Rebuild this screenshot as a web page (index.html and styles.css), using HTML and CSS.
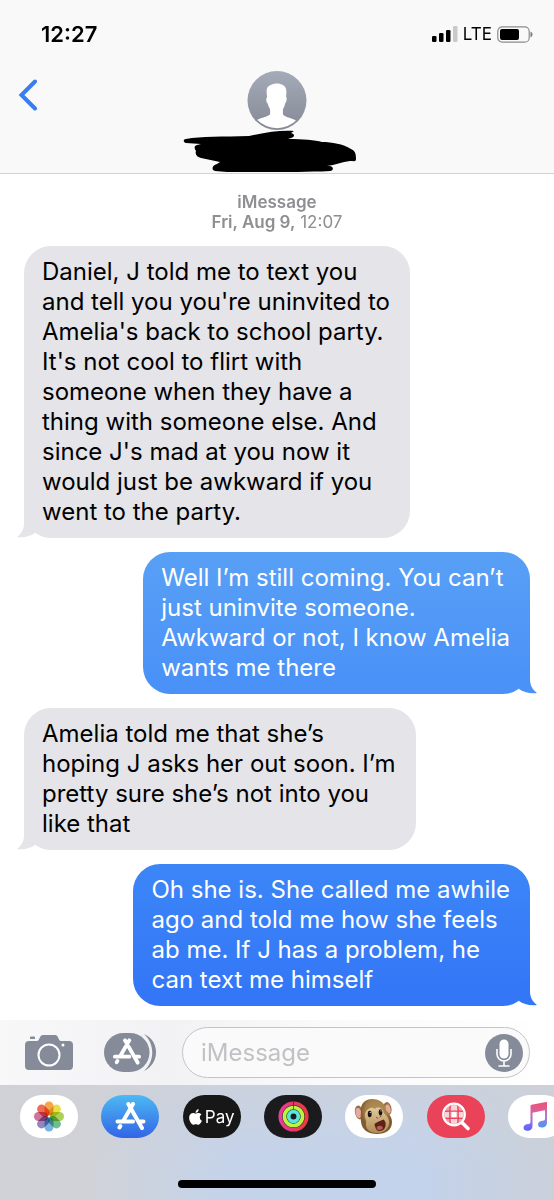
FILE: index.html
```
<!DOCTYPE html>
<html lang="en">
<head>
  <meta charset="UTF-8">
  <meta name="viewport" content="width=device-width, initial-scale=1">
  <title>iMessage</title>
  <link rel="stylesheet" href="styles.css">
</head>
<body>

<header class="header">
  <div class="status">
    <time class="clock">12:27</time>
    <div class="status-icons">
      <svg width="26" height="16" viewBox="0 0 26 16" aria-hidden="true">
        <rect x="0" y="10" width="4.500" height="6" rx="1.200"/>
        <rect x="7" y="7" width="4.500" height="9" rx="1.200"/>
        <rect x="14" y="4" width="4.500" height="12" rx="1.200"/>
        <rect x="21" y="0" width="4.500" height="16" rx="1.200" fill="#c9c9c9"/>
      </svg>
      <span>LTE</span>
      <svg width="36" height="17" viewBox="0 0 36 17" aria-hidden="true">
        <rect x=".8" y=".8" width="31.4" height="15.4" rx="4.5" fill="none" stroke="#8c8c8c" stroke-width="1.2"/>
        <rect x="3" y="3" width="19" height="11" rx="2"/>
        <path d="M33.5 5.5q2 .8 2 3t-2 3z" fill="#777"/>
      </svg>
    </div>
  </div>

  <div class="nav">
    <button class="back" aria-label="Back">
      <svg width="20" height="32" viewBox="0 0 20 32"><path d="M17 2.500 3.500 16 17 29.500" fill="none" stroke="#3a7df0" stroke-width="4" stroke-linecap="round"/></svg>
    </button>
    <div class="contact">
      <svg width="60" height="59" viewBox="0 0 60 60" aria-hidden="true">
        <defs>
          <linearGradient id="avatar" x2="0" y2="1"><stop stop-color="#a5abb9"/><stop offset="1" stop-color="#858995"/></linearGradient>
          <clipPath id="face"><circle cx="30" cy="30" r="28.200"/></clipPath>
        </defs>
        <circle cx="30" cy="30" r="30" fill="url(#avatar)"/>
        <path clip-path="url(#face)" fill="#fff" d="M20 27c-1.300-9-.2-11 3-12.500 4.500-2.500 9.500-2.500 13.500 0 3 2 3.500 5 2.700 12 1.300.5.5 5.500-1 6.500-.5 3-1.500 4.500-2.200 6v5c1 2.500 7 3.500 13 6v10H9V50c6-3 12-3.500 14-6v-5c-1.200-2-2-4-2.500-6-1.600-1-2-5.500-.5-6z"/>
      </svg>
      <svg width="188" height="42" viewBox="0 0 188 42" aria-hidden="true">
        <path d="M3 9C18 6 40 7 66 6 83 2 99 0 111 1l-3 2c4 1 4 4 0 5l-3 1c15 0 27 1 34 3 10 0 21 2 29 7 4 2 5 4 5 10 0 3-2 2-6 2-8 1-15 4-23 5l2 0c5 0 5 5 1 5-14 1-28 0-44 2-18 1-40 1-59-1l-12-1c-4-1-3-6 2-7l3-2-19-4c-5-1-6-5-5-7-2-3-2-5 1-6l4-1L3 13c-3-1-3-4 0-4z"/>
      </svg>
    </div>
  </div>
</header>

<main class="chat">
  <p class="stamp"><b>iMessage</b><br><b>Fri, Aug 9,</b> 12:07</p>

  <p class="bubble received">Daniel, J told me to text you<br>and tell you you're uninvited to<br>Amelia's back to school party.<br>It's not cool to flirt with<br>someone when they have a<br>thing with someone else. And<br>since J's mad at you now it<br>would just be awkward if you<br>went to the party.</p>

  <p class="bubble sent light">Well I’m still coming. You can’t<br>just uninvite someone.<br>Awkward or not, I know Amelia<br>wants me there</p>

  <p class="bubble received">Amelia told me that she’s<br>hoping J asks her out soon. I’m<br>pretty sure she’s not into you<br>like that</p>

  <p class="bubble sent">Oh she is. She called me awhile<br>ago and told me how she feels<br>ab me. If J has a problem, he<br>can text me himself</p>
</main>

<form class="composer">
  <button type="button" aria-label="Camera">
    <svg width="48" height="37" viewBox="0 0 48 37">
      <path fill="#858b99" d="M5 3.500Q5 2.500 6 2.500h3q1 0 1 1V5H5zM4 7h8c3 0 2-6 6-6h12c4 0 3 6 6 6h8q4 0 4 4v21q0 4-4 4H4q-4 0-4-4V11q0-4 4-4z"/>
      <circle cx="24" cy="21" r="10.500" fill="none" stroke="#fff" stroke-width="2"/>
      <circle cx="38" cy="11" r="1.500" fill="#fff"/>
    </svg>
  </button>
  <button type="button" aria-label="Apps">
    <svg width="52" height="39" viewBox="0 0 52 39">
      <path fill="#858b99" d="M19.500 0H26a19.500 19.500 0 0 1 0 39h-6.500a19.500 19.500 0 0 1 0-39z"/>
      <path fill="#858b99" d="M40 1c16 7 16 29 0 37 11-10 11-27 0-37z"/>
      <svg x="9" y="5" width="28" height="27" viewBox="0 0 30 28"><use href="#store-a"/></svg>
    </svg>
  </button>
  <div class="field">
    <input type="text" placeholder="iMessage" aria-label="iMessage">
    <button type="button" aria-label="Record audio">
      <svg width="38" height="38" viewBox="0 0 38 38">
        <circle cx="19" cy="19" r="19" fill="#858b99"/>
        <rect x="14.500" y="5.500" width="9" height="19" rx="4.500" fill="#fff"/>
        <path d="M12 15v5a7 7 0 0 0 14 0v-5M19 27v4.500M13.500 32h11" fill="none" stroke="#fff" stroke-width="1.600"/>
      </svg>
    </button>
  </div>
</form>

<footer class="drawer">
  <nav class="apps" aria-label="iMessage apps">
    <button class="app" aria-label="Photos">
      <svg width="58" height="43" viewBox="0 0 58 43">
        <defs><rect id="petal" x="-4.500" y="-15" width="9" height="14" rx="4.500"/></defs>
        <g class="petals" transform="translate(29 21.500)">
          <use href="#petal" fill="#f5a54a"/>
          <use href="#petal" fill="#e9de45" transform="rotate(45)"/>
          <use href="#petal" fill="#aed058" transform="rotate(90)"/>
          <use href="#petal" fill="#72bd90" transform="rotate(135)"/>
          <use href="#petal" fill="#78b3df" transform="rotate(180)"/>
          <use href="#petal" fill="#9386bd" transform="rotate(225)"/>
          <use href="#petal" fill="#cf729d" transform="rotate(270)"/>
          <use href="#petal" fill="#ed6d56" transform="rotate(315)"/>
        </g>
      </svg>
    </button>
    <button class="app store" aria-label="App Store">
      <svg width="58" height="43" viewBox="0 0 58 43">
        <defs>
          <g id="store-a" fill="none" stroke="#fff" stroke-width="4" stroke-linecap="round">
            <path d="M17.500 2 8 18.500M4.800 24l-.8 1.500M2 19.500h15.500M24.500 19.500H28M12.800 2 26.500 26"/>
          </g>
        </defs>
        <svg x="14" y="7" width="31" height="28" viewBox="0 0 30 28"><use href="#store-a"/></svg>
      </svg>
    </button>
    <button class="app pay" aria-label="Apple Pay">
      <svg width="13" height="16" viewBox="2 0 20 24" fill="#fff"><path d="M12.152 6.896c-.948 0-2.415-1.078-3.960-1.040-2.040.027-3.910 1.183-4.961 3.014-2.117 3.675-.546 9.103 1.519 12.090 1.013 1.454 2.208 3.090 3.792 3.039 1.520-.065 2.090-.987 3.935-.987 1.831 0 2.350.987 3.960.948 1.637-.026 2.676-1.480 3.676-2.948 1.156-1.688 1.636-3.325 1.662-3.415-.039-.013-3.182-1.221-3.220-4.857-.026-3.040 2.480-4.494 2.597-4.559-1.429-2.090-3.623-2.324-4.390-2.376-2-.156-3.675 1.090-4.610 1.090zM15.530 3.830c.843-1.012 1.400-2.427 1.245-3.830-1.207.052-2.662.805-3.532 1.818-.780.896-1.454 2.338-1.273 3.714 1.338.104 2.715-.688 3.559-1.701"/></svg>
      <span>Pay</span>
    </button>
    <button class="app activity" aria-label="Activity">
      <svg width="58" height="43" viewBox="0 0 58 43">
        <defs><linearGradient id="ring"><stop stop-color="#ec3a9d"/><stop offset=".5" stop-color="#e8386c"/><stop offset="1" stop-color="#ee3a3c"/></linearGradient></defs>
        <g fill="none" stroke-width="3.700">
          <circle cx="29.500" cy="21.500" r="13.200" stroke="url(#ring)"/>
          <circle cx="29.500" cy="21.500" r="9" stroke="#bdf444"/>
          <circle cx="29.500" cy="21.500" r="4.800" stroke="#5be6dc"/>
          <path d="M29.500 6.500v4" stroke="#7d1638" stroke-width="1"/>
          <path d="M29.500 11v4" stroke="#50771f" stroke-width="1"/>
        </g>
      </svg>
    </button>
    <button class="app" aria-label="Animoji">
      <svg width="58" height="43" viewBox="0 0 58 43">
        <defs>
          <radialGradient id="fur" cx=".5" cy=".35"><stop stop-color="#b8935a"/><stop offset=".7" stop-color="#a37f4a"/><stop offset="1" stop-color="#7d5b30"/></radialGradient>
          <linearGradient id="skin" x2="0" y2="1"><stop stop-color="#e3c89c"/><stop offset="1" stop-color="#b28a55"/></linearGradient>
        </defs>
        <ellipse cx="14" cy="17.500" rx="4" ry="7" fill="#9a713c" transform="rotate(-12 14 17.500)"/>
        <ellipse cx="13.500" cy="18" rx="2.800" ry="5" fill="#e3aaa0" transform="rotate(-12 13.500 18)"/>
        <ellipse cx="42.500" cy="13.500" rx="4" ry="6.500" fill="#9a713c" transform="rotate(-12 42.500 13.500)"/>
        <ellipse cx="43" cy="14" rx="2.500" ry="4.600" fill="#e3aaa0" transform="rotate(-12 43 14)"/>
        <path fill="url(#fur)" d="M16 17C15 9 20 4 27 4c8 0 13 4 14 11 3 4 6 7 6 12 0 8-6 12-15 12-9 0-15-4-16-12-.5-4-.3-7 0-10z"/>
        <path fill="url(#skin)" d="M30 14c3-3 8-1 9 4 3 3 6 7 5 11-1 6-6 9-12 9-7 0-12-4-11-10 1-3-2-5-1-9 1-5 7-8 10-5z"/>
        <ellipse cx="24.700" cy="19" rx="1.900" ry="3.200" fill="#17120e"/>
        <ellipse cx="35.500" cy="17.300" rx="1.800" ry="3.100" fill="#17120e"/>
        <circle cx="25.200" cy="17.500" r=".6" fill="#fff"/>
        <circle cx="36" cy="15.800" r=".6" fill="#fff"/>
        <path d="M31.500 22.500l1.300.8M35 22l1-.8" stroke="#77502e" stroke-linecap="round"/>
        <path fill="#5c2118" d="M29.500 29c2-2 6-3 9-4.500 3 2 3 8-.5 10.500-3 2-6 1-7-1-.5-2-1.500-3-1.500-5z"/>
        <path fill="#b95a50" d="M31.500 33c1-3 5-3 6.500-.5-1 3-5 4-6.500.5z"/>
      </svg>
    </button>
    <button class="app images" aria-label="Images">
      <svg width="58" height="43" viewBox="0 0 58 43">
        <defs><clipPath id="lens"><circle cx="27" cy="19.500" r="9.500"/></clipPath></defs>
        <g clip-path="url(#lens)">
          <path fill="#f6a0ad" d="M16 8h22v23H16z"/>
          <path fill="#fbd3d9" d="M24 9h6v7h-6zM17 17h6v6h-6zM31 17h6v6h-6zM24 24h6v6h-6z"/>
          <path fill="#fff" d="M24.500 17h5v5h-5z"/>
          <path d="M23.500 8q-1.500 11 0 23M30.500 8q1.500 11 0 23M16 16.500q11-1 22 0M16 23q11 1 22 0" fill="none" stroke="#ea4259" stroke-width="1.200"/>
        </g>
        <circle cx="27" cy="19.500" r="10.800" fill="none" stroke="#fff" stroke-width="2.200"/>
        <path d="m35.500 28 5.500 5.500" stroke="#fff" stroke-width="3.600" stroke-linecap="round"/>
      </svg>
    </button>
    <button class="app" aria-label="Music">
      <svg width="58" height="43" viewBox="0 0 58 43">
        <defs>
          <linearGradient id="note" gradientUnits="userSpaceOnUse" x1="28" y1="8" x2="28" y2="35"><stop stop-color="#ea5476"/><stop offset=".4" stop-color="#d763a5"/><stop offset=".7" stop-color="#936ee8"/><stop offset="1" stop-color="#5a64f4"/></linearGradient>
          <linearGradient id="note-blue" gradientUnits="userSpaceOnUse" x1="28" y1="8" x2="28" y2="33"><stop stop-color="#e9536f"/><stop offset=".5" stop-color="#b578cf"/><stop offset="1" stop-color="#4498f0"/></linearGradient>
        </defs>
        <path fill="url(#note)" d="M22.500 11q0-1 1-1.200L38 7q1-.2 1 .8v7l-14.500 3v13c0 3-2 5-5.300 5-4.500 0-5-5.500-.5-6.500 2-.5 3.800-.3 3.800-2.300z"/>
        <path fill="url(#note-blue)" d="M37 14h2v13.500c0 3-2 5-5.300 5-4.500 0-5-5.500-.5-6.500 2-.5 3.800-.3 3.800-2.300z"/>
      </svg>
    </button>
  </nav>
  <div class="home-bar"></div>
</footer>

</body>
</html>
```
FILE: styles.css
```
* {
  margin: 0;
  padding: 0;
  box-sizing: border-box;
}

body {
  min-height: 100vh;
  display: flex;
  flex-direction: column;
  background: #fff;
  color: #000;
  font-family: Inter, "Liberation Sans", sans-serif;
}

svg {
  display: block;
  flex: none;
}

button {
  border: none;
  background: none;
  color: inherit;
  font-family: inherit;
  cursor: pointer;
}

/* Header */
.header {
  background: #f9f9f9;
  border-bottom: 1px solid #d3d3d3;
}

.status {
  display: flex;
  justify-content: space-between;
  align-items: center;
  padding: 20px 21px 0 41px;
  height: 48px;
}

.clock {
  font-size: 22px;
  font-weight: 600;
}

.status-icons {
  display: flex;
  align-items: center;
  gap: 5px;
  font-size: 17px;
}

.nav {
  display: grid;
  grid-template-columns: 1fr auto 1fr;
  align-items: start;
  padding: 23px 18px 1px;
}

.back {
  justify-self: start;
  padding-top: 8px;
}

.contact {
  display: flex;
  flex-direction: column;
  align-items: center;
}

/* Conversation */
.chat {
  flex: 1;
  display: flex;
  flex-direction: column;
  align-items: flex-start;
  gap: 14px;
  padding: 18px 24px 14px;
}

.stamp {
  align-self: center;
  color: #8e8e93;
  font-size: 17px;
  line-height: 20px;
  text-align: center;
}

.stamp b {
  font-weight: 600;
}

.bubble {
  position: relative;
  padding: 11px 20px 11px 18px;
  border-radius: 27px;
  font-size: 24px;
  line-height: 30px;
}

.received {
  background: #e4e4e9;
}

.sent {
  align-self: flex-end;
  background: linear-gradient(#3c86f8, #3375f6);
  color: #fff;
}

.sent.light {
  background: linear-gradient(#58a0f5, #4990f8);
}

/* Tail at the bottom corner */
.bubble::after {
  content: "";
  position: absolute;
  bottom: 0;
  left: -7px;
  width: 20px;
  height: 30px;
  background: #e4e4e9;
  clip-path: path("M7 0V15C7 22 4 26 0 29C7 30 14 28 18 25L17 18Z");
}

.sent::after {
  left: auto;
  right: -7px;
  background: #3376f6;
  transform: scaleX(-1);
}

.sent.light::after {
  background: #4a91f8;
}

/* Message field */
.composer {
  display: flex;
  align-items: center;
  gap: 31px;
  padding: 7px 24px 7px 25px;
  background: linear-gradient(90deg, #f8f8f9, #f2f2f5 30%, #fafafc 60%, #fff);
}

.field {
  flex: 1;
  min-width: 0;
  display: flex;
  align-items: center;
  height: 51px;
  margin-left: -5px;
  padding: 0 6px 0 18px;
  background: #fafafa;
  border: 1px solid #c4c4c8;
  border-radius: 26px;
}

.field input {
  flex: 1;
  width: 100%;
  min-width: 0;
  border: none;
  outline: none;
  background: none;
  font-family: inherit;
  font-size: 24px;
}

.field input::placeholder {
  color: #c2c2c6;
}

/* App drawer */
.drawer {
  display: flex;
  flex-direction: column;
  gap: 42px;
  padding: 10px 0 12px;
  overflow: hidden;
  background:
    linear-gradient(rgba(208, 209, 214, .6), rgba(208, 209, 214, 0) 70%),
    linear-gradient(90deg, #d1d2d7 15%, #c4d3ea 42%, #c3d3ec 75%, #cad0da);
}

.apps {
  display: flex;
  justify-content: space-between;
  margin-right: -12px;
  padding-left: 20px;
}

.app {
  flex: none;
  display: flex;
  align-items: center;
  justify-content: center;
  width: 58px;
  height: 43px;
  border-radius: 22px;
  background: #fff;
}

.petals {
  isolation: isolate;
}

.petals use {
  mix-blend-mode: multiply;
}

.store {
  background: linear-gradient(#4db9f3, #3264e6);
}

.pay {
  gap: 3px;
  background: #171717;
  color: #fff;
  font-size: 17px;
}

.activity {
  background: #1b1b1e;
}

.images {
  background: #ea4259;
}

.home-bar {
  align-self: center;
  width: 198px;
  height: 8px;
  border-radius: 4px;
  background: #000;
}
```
